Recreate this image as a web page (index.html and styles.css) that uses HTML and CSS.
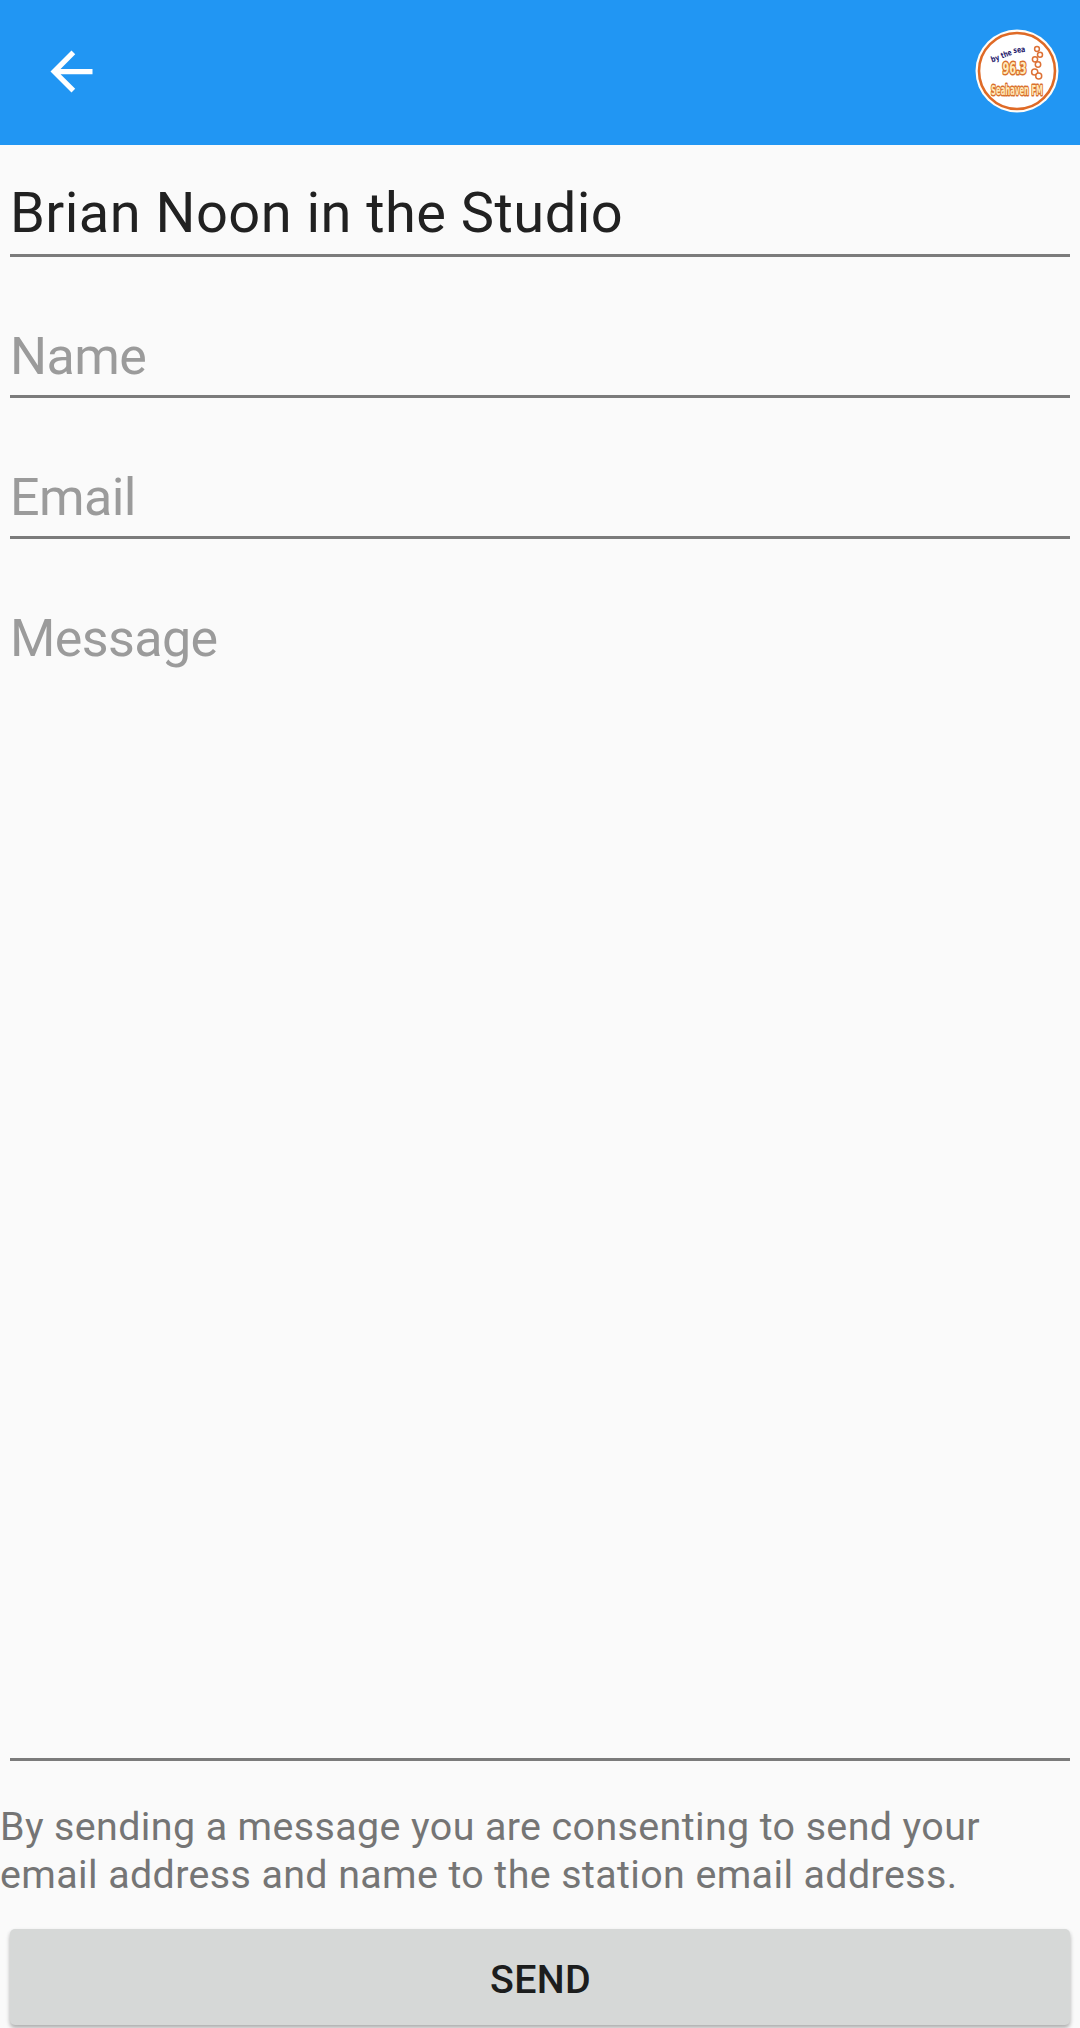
FILE: index.html
```html
<!DOCTYPE html>
<html lang="en">

<head>
    <meta charset="UTF-8">
    <meta name="viewport" content="width=device-width, initial-scale=1.0">
    <title>Message the Studio</title>
    <link rel="stylesheet" href="styles.css">
</head>

<body>

    <header class="app-bar">
        <a href="#" class="back" aria-label="Back">
            <svg viewBox="0 0 24 24" width="63" height="63">
                <path fill="#fff" d="M20 11H7.83l5.59-5.59L12 4l-8 8 8 8 1.41-1.41L7.83 13H20v-2z"/>
            </svg>
        </a>

        <!-- station logo -->
        <svg class="logo" viewBox="0 0 84 84" width="84" height="84">
            <circle cx="42" cy="42" r="41.5" fill="#fffdf8"/>
            <circle cx="42" cy="42" r="38" fill="#fff" stroke="#df6a26" stroke-width="2.6"/>
            <g class="logo-tagline">
                <text x="17" y="33.5" textLength="8.5" lengthAdjust="spacingAndGlyphs" transform="rotate(-20 17 33.5)">by</text>
                <text x="27" y="29.5" textLength="11" lengthAdjust="spacingAndGlyphs" transform="rotate(-20 27 29.5)">the</text>
                <text x="38.5" y="24" textLength="12" lengthAdjust="spacingAndGlyphs" transform="rotate(-5 38.5 24)">sea</text>
            </g>
            <text class="logo-freq" x="27.5" y="44.5" textLength="24" lengthAdjust="spacingAndGlyphs">96.3</text>
            <text class="logo-name" x="16" y="66" textLength="52" lengthAdjust="spacingAndGlyphs">Seahaven FM</text>
            <g class="logo-bubbles">
                <circle cx="62" cy="20" r="2.4"/>
                <circle cx="65" cy="25.7" r="2.5"/>
                <circle cx="60" cy="30.3" r="2.6"/>
                <circle cx="63" cy="35.5" r="2.7"/>
                <circle cx="59.7" cy="43" r="3.1"/>
                <circle cx="63.7" cy="47" r="3"/>
            </g>
        </svg>
    </header>

    <form class="message-form">
        <input type="text" class="field subject" name="subject" value="Brian Noon in the Studio">
        <input type="text" class="field" name="name" placeholder="Name">
        <input type="text" class="field" name="email" placeholder="Email">
        <textarea class="field message" name="message" placeholder="Message"></textarea>

        <p class="consent">
            By sending a message you are consenting to send your<br>
            email address and name to the station email address.
        </p>

        <button type="submit" class="send">SEND</button>
    </form>

</body>

</html>
```

FILE: styles.css
```css
* {
    box-sizing: border-box;
}

body {
    margin: 0;
    height: 2028px;
    display: flex;
    flex-direction: column;
    overflow: hidden;
    background-color: #fafafa;
    font-family: Roboto, sans-serif;
}

.app-bar {
    flex: none;
    height: 145px;
    display: flex;
    align-items: center;
    justify-content: space-between;
    padding: 0 21px 3px 39.5px;
    background-color: #2196f3;
}

.back,
.logo {
    display: block;
}

.back svg {
    display: block;
}

.logo {
    overflow: visible;
}

.logo text {
    font-family: "DejaVu Sans", sans-serif;
    font-weight: bold;
}

.logo-tagline text {
    font-size: 8px;
    fill: #25206b;
}

.logo .logo-freq,
.logo .logo-name {
    fill: #ffe9b8;
    stroke: #d9702c;
    stroke-width: 3px;
    stroke-linejoin: round;
    paint-order: stroke;
}

.logo-freq {
    font-size: 15px;
}

.logo-name {
    font-size: 14px;
}

.logo-bubbles circle {
    fill: #fff;
    stroke: #dd7136;
    stroke-width: 1.5px;
}

.message-form {
    flex: 1;
    display: flex;
    flex-direction: column;
}

.field {
    flex: none;
    margin: 0 10px;
    padding: 69px 0 8px;
    height: 141px;
    border: 0;
    border-bottom: 3px solid #7b7b7b;
    border-radius: 0;
    outline: 0;
    background: none;
    font-family: inherit;
    font-size: 52px;
    line-height: 61px;
    letter-spacing: -0.6px;
    color: #212121;
}

.field::placeholder {
    color: #9b9b9b;
    opacity: 1;
}

.subject {
    height: 112px;
    padding: 35px 0 8px;
    font-size: 56px;
    line-height: 66px;
    letter-spacing: 0.46px;
}

.message {
    height: 1222px;
    resize: none;
    overflow: hidden;
}

.consent {
    margin: 42px 0 30px;
    font-size: 39.4px;
    line-height: 48px;
    letter-spacing: 0.39px;
    color: #757575;
    white-space: nowrap;
}

.send {
    flex: none;
    height: 96px;
    margin: 0 10px;
    padding: 4px 0 0 1px;
    border: 0;
    border-radius: 5px;
    background-color: #d6d8d7;
    box-shadow: 0 3px 4px rgba(0, 0, 0, 0.25), 0 2px 4px rgba(0, 0, 0, 0.08);
    font-family: inherit;
    font-size: 39.4px;
    font-weight: 500;
    letter-spacing: 0.3px;
    color: #1c1d1d;
}
```
